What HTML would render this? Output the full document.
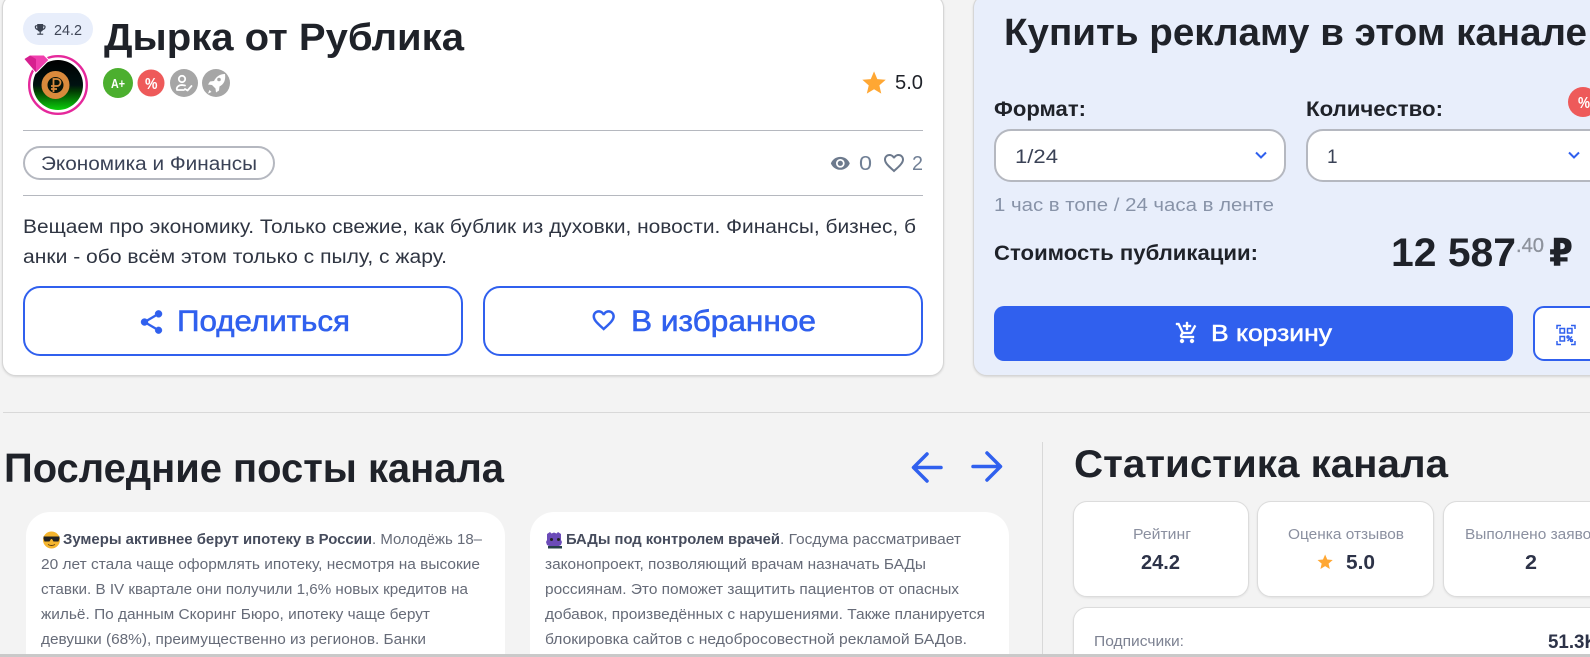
<!DOCTYPE html>
<html lang="ru">
<head>
<meta charset="utf-8">
<title>Дырка от Рублика</title>
<style>
html,body{margin:0;padding:0;width:1590px;height:657px;overflow:hidden;background:#f3f3f3}
body{position:relative;font-family:"Liberation Sans",sans-serif}
div{position:absolute;box-sizing:border-box}
svg{position:absolute;left:0;top:0}
text{font-family:"Liberation Sans","DejaVu Sans",sans-serif}
#p{left:0;top:0;width:1590px;height:657px;overflow:hidden}
.card{background:#fff;border:1px solid #d6d6d6;box-shadow:0 1px 2px rgba(0,0,0,.12);border-radius:14px}
.post{background:#fff;border-radius:24px 24px 0 0;top:512px;width:479px;height:145px}
.stat{background:#fff;border:1px solid #dcdcdc;box-shadow:0 1px 2px rgba(0,0,0,.08);border-radius:14px;top:501px;width:176px;height:96px}
.btn{background:#fff;border:2.5px solid #3060ee;border-radius:17px}
.sel{background:#fff;border:2px solid #b5b8c0;border-radius:17px;top:129px;height:53px}
</style>
</head>
<body>
<div id="p">
<div class="card" style="left:2px;top:-6px;width:942px;height:382px"></div>
<div class="card" style="left:973px;top:-6px;width:640px;height:382px;background:#e8eefb"></div>

<div style="left:23px;top:13px;width:70px;height:32px;border-radius:16px;background:#e8eefb"></div>
<div style="left:23px;top:130px;width:900px;height:1px;background:#b5b8bf"></div>
<div style="left:23px;top:195px;width:900px;height:1px;background:#b5b8bf"></div>
<div style="left:23px;top:146px;width:252px;height:34px;border-radius:17px;border:2px solid #b5b8c0;background:#fff"></div>
<div class="btn" style="left:23px;top:286px;width:440px;height:70px"></div>
<div class="btn" style="left:483px;top:286px;width:440px;height:70px"></div>

<div class="sel" style="left:994px;width:292px"></div>
<div class="sel" style="left:1306px;width:310px"></div>
<div style="left:994px;top:306px;width:519px;height:55px;border-radius:10px;background:#3060ee"></div>
<div class="btn" style="left:1533px;top:306px;width:90px;height:55px;border-radius:11px"></div>

<div style="left:3px;top:412px;width:1587px;height:1px;background:#d8d8d8"></div>
<div style="left:1042px;top:442px;width:1px;height:215px;background:#d8d8d8"></div>

<div class="post" style="left:26px"></div>
<div class="post" style="left:530px"></div>
<div class="stat" style="left:1073px"></div>
<div class="stat" style="left:1257px;width:177px"></div>
<div class="stat" style="left:1443px"></div>
<div class="stat" style="left:1073px;top:607px;width:560px;height:50px;border-radius:14px 14px 0 0"></div>

<svg width="1590" height="657" viewBox="0 0 1590 657" xmlns="http://www.w3.org/2000/svg">
<defs>
<linearGradient id="av" x1="0" y1="0" x2="0" y2="1"><stop offset="0" stop-color="#000"/><stop offset=".5" stop-color="#011"/><stop offset=".62" stop-color="#023a02"/><stop offset="1" stop-color="#0bd00b"/></linearGradient>
</defs>

<!-- trophy -->
<path transform="translate(33,22.200) scale(.6)" fill="#3a4150" d="M19 5h-2V3H7v2H5c-1.100 0-2 .9-2 2v1c0 2.550 1.920 4.630 4.390 4.940.63 1.500 1.980 2.630 3.610 2.960V19H7v2h10v-2h-4v-3.100c1.630-.33 2.980-1.460 3.610-2.960C19.080 12.630 21 10.550 21 8V7c0-1.100-.9-2-2-2zM5 8V7h2v3.820C5.840 10.400 5 9.300 5 8zm14 0c0 1.300-.84 2.400-2 2.820V7h2v1z"/>
<text x="54" y="35" font-size="14.500" fill="#3f4657" textLength="28" lengthAdjust="spacingAndGlyphs">24.2</text>

<!-- title -->
<text x="104" y="50" font-size="38" font-weight="700" fill="#1f2229" textLength="360" lengthAdjust="spacingAndGlyphs">Дырка от Рублика</text>

<!-- avatar -->
<circle cx="58" cy="85" r="28.800" fill="#fff" stroke="#e5289b" stroke-width="2.400"/>
<circle cx="58" cy="85" r="25" fill="url(#av)"/>
<circle cx="55.500" cy="85" r="11" fill="#07140a" stroke="#d98a3c" stroke-width="6"/>
<path d="M53.500 92V79h3.500a3.500 3.500 0 0 1 0 7h-6M51 89h6" fill="none" stroke="#d98a3c" stroke-width="1.800"/>
<path d="M24 59L30 55H44L49 60L36 73Z" fill="#f03fae" stroke="#fff" stroke-width="1"/>
<path d="M24.500 59L30 55.500L36 59V72.500Z" fill="#d6208f"/>

<!-- badges -->
<circle cx="118" cy="83" r="15" fill="#4caf2f"/>
<text x="111" y="88" font-size="13" font-weight="700" fill="#fff" textLength="14" lengthAdjust="spacingAndGlyphs">A+</text>
<circle cx="151" cy="83" r="13.500" fill="#ee5a5a"/>
<text x="145" y="89" font-size="16" font-weight="700" fill="#fff" textLength="12.500" lengthAdjust="spacingAndGlyphs">%</text>
<circle cx="184" cy="83" r="14" fill="#a6a6a6"/>
<g fill="none" stroke="#fff" stroke-width="1.800" stroke-linecap="round" stroke-linejoin="round"><circle cx="182" cy="79" r="3.200"/><path d="M177 90c-1-3 2-5 5-5l3 .5M177 90h7M185 89l2.500 1.500 4-4.500"/></g>
<circle cx="216" cy="83" r="14" fill="#a6a6a6"/>
<path d="M225 74c-5.500 0-9 3-11 7l-4 .5-2 3 4 .5 3.500 3.500.5 4 3-2 .5-4c4-2 6.500-6 5.500-12.500zM209.500 90l-1.500 3.500L211.500 92z" fill="#fff"/>
<circle cx="219" cy="79.500" r="1.800" fill="#a6a6a6"/>

<!-- rating -->
<path transform="translate(860,69) scale(1.170)" fill="#ffa733" d="M12 17.270L18.180 21l-1.640-7.030L22 9.240l-7.190-.61L12 2 9.190 8.630 2 9.240l5.460 4.730L5.820 21z"/>
<text x="895" y="89" font-size="20" fill="#1f2229" textLength="28" lengthAdjust="spacingAndGlyphs">5.0</text>

<!-- tag row -->
<text x="41" y="170" font-size="19" fill="#3a4256" textLength="216" lengthAdjust="spacingAndGlyphs">Экономика и Финансы</text>
<path transform="translate(830,153) scale(.86)" fill="#6d7a8d" d="M12 4.500C7 4.500 2.730 7.610 1 12c1.730 4.390 6 7.500 11 7.500s9.270-3.110 11-7.500c-1.730-4.390-6-7.500-11-7.500zM12 17c-2.760 0-5-2.240-5-5s2.240-5 5-5 5 2.240 5 5-2.240 5-5 5zm0-8c-1.660 0-3 1.340-3 3s1.340 3 3 3 3-1.340 3-3-1.340-3-3-3z"/>
<text x="859" y="170" font-size="20" fill="#718096" textLength="13" lengthAdjust="spacingAndGlyphs">0</text>
<path transform="translate(882,151) scale(1)" fill="#6d7a8d" d="M16.500 3c-1.740 0-3.410.810-4.500 2.090C10.910 3.810 9.240 3 7.500 3 4.420 3 2 5.420 2 8.500c0 3.780 3.400 6.860 8.550 11.540L12 21.350l1.450-1.320C18.600 15.360 22 12.280 22 8.500 22 5.420 19.580 3 16.500 3zm-4.400 15.550l-.1.100-.1-.1C7.140 14.240 4 11.390 4 8.500 4 6.500 5.500 5 7.500 5c1.540 0 3.040.990 3.570 2.360h1.870C13.460 5.990 14.960 5 16.500 5c2 0 3.500 1.500 3.500 3.500 0 2.890-3.140 5.740-7.900 10.050z"/>
<text x="912" y="170" font-size="20" fill="#718096" textLength="11" lengthAdjust="spacingAndGlyphs">2</text>

<!-- description -->
<text x="23" y="233" font-size="19" fill="#2f3542" textLength="893" lengthAdjust="spacingAndGlyphs">Вещаем про экономику. Только свежие, как бублик из духовки, новости. Финансы, бизнес, б</text>
<text x="23" y="263" font-size="19" fill="#2f3542" textLength="424" lengthAdjust="spacingAndGlyphs">анки - обо всём этом только с пылу, с жару.</text>

<!-- share/fav -->
<path transform="translate(137.500,308) scale(1.170)" fill="#3060ee" stroke="#3060ee" stroke-width=".3" d="M18 16.080c-.76 0-1.440.3-1.960.77L8.910 12.700c.05-.23.09-.46.09-.7s-.04-.47-.09-.7l7.050-4.110c.54.5 1.250.81 2.040.81 1.660 0 3-1.340 3-3s-1.340-3-3-3-3 1.340-3 3c0 .24.04.47.09.7L8.040 9.810C7.500 9.310 6.790 9 6 9c-1.660 0-3 1.340-3 3s1.340 3 3 3c.79 0 1.500-.31 2.040-.81l7.120 4.160c-.05.21-.08.43-.08.65 0 1.610 1.310 2.920 2.920 2.920 1.610 0 2.920-1.310 2.920-2.920s-1.310-2.920-2.920-2.920z"/>
<text x="177" y="331" font-size="30" fill="#3060ee" stroke="#3060ee" stroke-width=".6" textLength="173" lengthAdjust="spacingAndGlyphs">Поделиться</text>
<path transform="translate(590.500,307) scale(1.100)" fill="#3060ee" stroke="#3060ee" stroke-width=".3" d="M16.500 3c-1.740 0-3.410.810-4.500 2.090C10.910 3.810 9.240 3 7.500 3 4.420 3 2 5.420 2 8.500c0 3.780 3.400 6.860 8.550 11.540L12 21.350l1.450-1.320C18.600 15.360 22 12.280 22 8.500 22 5.420 19.580 3 16.500 3zm-4.400 15.550l-.1.100-.1-.1C7.140 14.240 4 11.390 4 8.500 4 6.500 5.500 5 7.500 5c1.540 0 3.040.990 3.570 2.360h1.870C13.460 5.990 14.960 5 16.500 5c2 0 3.500 1.500 3.500 3.500 0 2.890-3.140 5.740-7.900 10.050z"/>
<text x="631" y="331" font-size="30" fill="#3060ee" stroke="#3060ee" stroke-width=".6" textLength="185" lengthAdjust="spacingAndGlyphs">В избранное</text>

<!-- right card -->
<text x="1004" y="45" font-size="38" font-weight="700" fill="#1f2229" textLength="583" lengthAdjust="spacingAndGlyphs">Купить рекламу в этом канале</text>
<text x="994" y="116" font-size="21" font-weight="700" fill="#1f2229" textLength="92" lengthAdjust="spacingAndGlyphs">Формат:</text>
<text x="1306" y="116" font-size="21" font-weight="700" fill="#1f2229" textLength="137" lengthAdjust="spacingAndGlyphs">Количество:</text>
<circle cx="1583" cy="102" r="15" fill="#ee5a5a"/>
<text x="1578" y="108" font-size="16" font-weight="700" fill="#fff" textLength="12" lengthAdjust="spacingAndGlyphs">%</text>
<text x="1015" y="163" font-size="19" fill="#3a4256" textLength="43" lengthAdjust="spacingAndGlyphs">1/24</text>
<text x="1327" y="163" font-size="19" fill="#3a4256">1</text>
<path d="M1256 152.500l5 5 5-5M1569 152.500l5 5 5-5" fill="none" stroke="#3060ee" stroke-width="2"/>
<text x="994" y="211" font-size="18.500" fill="#8893a8" textLength="280" lengthAdjust="spacingAndGlyphs">1 час в топе / 24 часа в ленте</text>
<text x="994" y="260" font-size="21" font-weight="700" fill="#1f2229" textLength="264" lengthAdjust="spacingAndGlyphs">Стоимость публикации:</text>
<text x="1391" y="266" font-size="40" font-weight="700" fill="#1f2229" textLength="125" lengthAdjust="spacingAndGlyphs">12 587</text>
<text x="1516" y="252" font-size="20" fill="#8d929c" stroke="#8d929c" stroke-width=".3" textLength="28" lengthAdjust="spacingAndGlyphs">.40</text>
<text x="1549" y="266" font-size="38" font-weight="700" fill="#1f2229" textLength="24" lengthAdjust="spacingAndGlyphs">₽</text>
<path transform="translate(1175,321)" fill="#fff" stroke="#fff" stroke-width=".35" d="M11 9h2V6h3V4h-3V1h-2v3H8v2h3v3zm-4 9c-1.100 0-1.990.9-1.990 2S5.900 22 7 22s2-.9 2-2-.9-2-2-2zm10 0c-1.100 0-1.990.9-1.990 2s.89 2 1.990 2 2-.9 2-2-.9-2-2-2zm-9.830-3.250l.03-.12.9-1.630h7.450c.75 0 1.410-.41 1.750-1.030l3.860-7.010L19.420 4h-.01l-1.100 2-2.760 5H8.530l-.13-.27L6.160 6l-.95-2-.94-2H1v2h2l3.600 7.590-1.350 2.450c-.16.28-.25.61-.25.96 0 1.100.9 2 2 2h12v-2H7.420c-.13 0-.25-.11-.25-.25z"/>
<text x="1211" y="341" font-size="23" fill="#fff" stroke="#fff" stroke-width=".5" textLength="121" lengthAdjust="spacingAndGlyphs">В корзину</text>
<g fill="none" stroke="#3060ee" stroke-width="1.500"><path d="M1557 329v-3.500h4M1571 325.500h4v3.500M1575 341v3.500h-4M1561 344.500h-4V341"/><rect x="1560" y="328.500" width="4.500" height="4.500"/><rect x="1567.500" y="328.500" width="4.500" height="4.500"/><rect x="1560" y="336.500" width="4.500" height="4.500"/><path d="M1567.500 341l4.500-4.500"/><circle cx="1568" cy="337" r="1"/><circle cx="1571.500" cy="340.500" r="1"/></g>

<!-- headings -->
<text x="4" y="482" font-size="41" font-weight="700" fill="#1f2229" textLength="500" lengthAdjust="spacingAndGlyphs">Последние посты канала</text>
<g fill="none" stroke="#3060ee" stroke-width="3.500" stroke-linecap="round" stroke-linejoin="round"><path d="M941 467.500H914M927 454l-13.500 13.500L927 481"/><path d="M973 466.500H1000M987 453l13.500 13.500L987 480"/></g>
<text x="1074" y="477" font-size="39" font-weight="700" fill="#1f2229" textLength="374" lengthAdjust="spacingAndGlyphs">Статистика канала</text>

<!-- post 1 -->
<circle cx="51.500" cy="540" r="8.500" fill="#f5b52e"/>
<path d="M43.500 536.500h16v2l-1 3h-5l-1.500-2.500h-1l-1.500 2.500h-5l-1-3z" fill="#222"/>
<path d="M48 544.500q3.500 2 7 0" fill="none" stroke="#5a3a10" stroke-width="1"/>
<text x="63" y="544" font-size="14.500" font-weight="700" fill="#454b5c" textLength="309" lengthAdjust="spacingAndGlyphs">Зумеры активнее берут ипотеку в России</text>
<text x="372" y="544" font-size="14.500" fill="#666b78" textLength="110" lengthAdjust="spacingAndGlyphs">. Молодёжь 18–</text>
<text x="41" y="569" font-size="14.500" fill="#666b78" textLength="439" lengthAdjust="spacingAndGlyphs">20 лет стала чаще оформлять ипотеку, несмотря на высокие</text>
<text x="41" y="594" font-size="14.500" fill="#666b78" textLength="427" lengthAdjust="spacingAndGlyphs">ставки. В IV квартале они получили 1,6% новых кредитов на</text>
<text x="41" y="619" font-size="14.500" fill="#666b78" textLength="389" lengthAdjust="spacingAndGlyphs">жильё. По данным Скоринг Бюро, ипотеку чаще берут</text>
<text x="41" y="644" font-size="14.500" fill="#666b78" textLength="385" lengthAdjust="spacingAndGlyphs">девушки (68%), преимущественно из регионов. Банки</text>

<!-- post 2 -->
<path d="M547 534l3-2 1.500 1.500 2.500-1 2.500 1L558 532l3 2v6l1 2-1 3-2 1v2h-10v-2l-2-1-1-3 1-2z" fill="#6b4bb8"/>
<path d="M548 546h14v2.500h-14z" fill="#27404a"/>
<circle cx="551.500" cy="539.500" r="1.500" fill="#222"/><circle cx="558.500" cy="539.500" r="1.500" fill="#222"/>
<text x="566" y="544" font-size="14.500" font-weight="700" fill="#454b5c" textLength="214" lengthAdjust="spacingAndGlyphs">БАДы под контролем врачей</text>
<text x="780" y="544" font-size="14.500" fill="#666b78" textLength="181" lengthAdjust="spacingAndGlyphs">. Госдума рассматривает</text>
<text x="545" y="569" font-size="14.500" fill="#666b78" textLength="381" lengthAdjust="spacingAndGlyphs">законопроект, позволяющий врачам назначать БАДы</text>
<text x="545" y="594" font-size="14.500" fill="#666b78" textLength="414" lengthAdjust="spacingAndGlyphs">россиянам. Это поможет защитить пациентов от опасных</text>
<text x="545" y="619" font-size="14.500" fill="#666b78" textLength="440" lengthAdjust="spacingAndGlyphs">добавок, произведённых с нарушениями. Также планируется</text>
<text x="545" y="644" font-size="14.500" fill="#666b78" textLength="422" lengthAdjust="spacingAndGlyphs">блокировка сайтов с недобросовестной рекламой БАДов.</text>

<!-- stats -->
<text x="1133" y="539" font-size="14.500" fill="#8b90a0" textLength="58" lengthAdjust="spacingAndGlyphs">Рейтинг</text>
<text x="1141" y="569" font-size="20" font-weight="700" fill="#2d3348" textLength="39" lengthAdjust="spacingAndGlyphs">24.2</text>
<text x="1288" y="539" font-size="14.500" fill="#8b90a0" textLength="116" lengthAdjust="spacingAndGlyphs">Оценка отзывов</text>
<path transform="translate(1316,553) scale(.76)" fill="#ffa733" d="M12 17.270L18.180 21l-1.640-7.030L22 9.240l-7.190-.61L12 2 9.190 8.630 2 9.240l5.460 4.730L5.820 21z"/>
<text x="1346" y="569" font-size="20" font-weight="700" fill="#2d3348" textLength="29" lengthAdjust="spacingAndGlyphs">5.0</text>
<text x="1465" y="539" font-size="14.500" fill="#8b90a0" textLength="133" lengthAdjust="spacingAndGlyphs">Выполнено заявок</text>
<text x="1525" y="569" font-size="20" font-weight="700" fill="#2d3348" textLength="12" lengthAdjust="spacingAndGlyphs">2</text>
<text x="1094" y="646" font-size="14.500" fill="#7d8292" textLength="90" lengthAdjust="spacingAndGlyphs">Подписчики:</text>
<text x="1548" y="648" font-size="19" font-weight="700" fill="#2d3348" textLength="50" lengthAdjust="spacingAndGlyphs">51.3K</text>
</svg>

<div style="left:0;top:654px;width:1590px;height:3px;background:#c9c9c9"></div>
</div>
</body>
</html>
